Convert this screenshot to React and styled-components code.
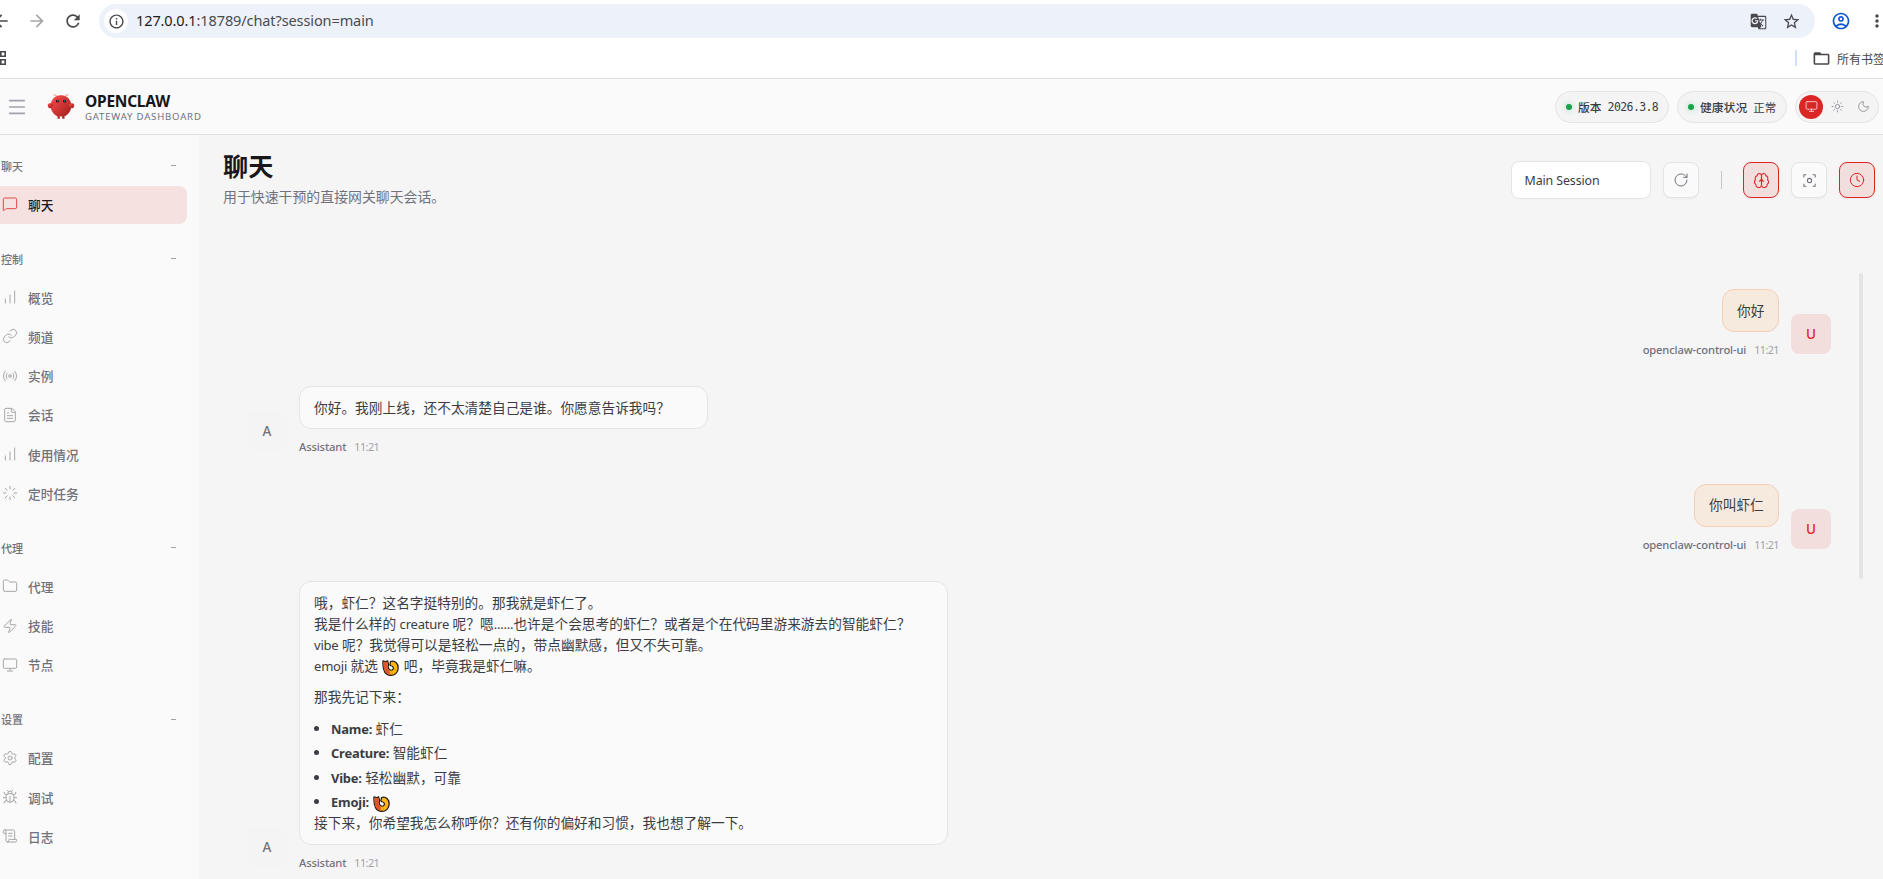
import React from 'react';
import styled, { createGlobalStyle, css } from 'styled-components';
import {
  MessageSquare, ChartNoAxesColumnIncreasing, Link, Radio, FileText, Loader, Folder, Zap,
  Monitor, Settings, Bug, ScrollText, Sun, Moon, RotateCw, Clock, Menu,
} from 'lucide-react';
import {
  MdArrowBack, MdArrowForward, MdRefresh, MdInfoOutline, MdGTranslate, MdStarBorder,
  MdMoreVert, MdFolderOpen, MdOutlineAccountCircle,
} from 'react-icons/md';

const sans = '"Noto Sans", "Noto Sans CJK SC", sans-serif';
const cjk = '"Noto Sans CJK SC", "Noto Sans", sans-serif';

const GlobalStyle = createGlobalStyle`
  * { box-sizing: border-box; }
  html, body { margin: 0; overflow: hidden; }
  body { font-family: ${sans}; color: #3c3c43; background: #fff; }
  button { font: inherit; color: inherit; padding: 0; }
`;

const Page = styled.div`
  display: flex;
  flex-direction: column;
  width: 1883px;
  height: 879px;
  overflow: hidden;
`;

/* browser chrome */

const BrowserBar = styled.div`
  display: flex;
  align-items: center;
  height: 42px;
  color: #47484b;
  svg { flex: none; }
`;

const NavIcons = styled.div`
  display: flex;
  align-items: center;
  gap: 16px;
  width: 108px;
  margin-left: -9px;
  flex: none;
  .dim { color: #a5a6a8; }
`;

const AddressBar = styled.div`
  display: flex;
  align-items: center;
  flex: none;
  width: 1716px;
  height: 34px;
  padding: 0 14px 0 5px;
  border-radius: 17px;
  background: #edf1fa;
`;

const SiteInfo = styled.span`
  display: flex;
  align-items: center;
  justify-content: center;
  width: 24px;
  height: 24px;
  border-radius: 50%;
  background: #fff;
`;

const Url = styled.span`
  flex: 1;
  margin-left: 8px;
  padding-bottom: 2px;
  font-size: 14.5px;
  letter-spacing: -0.1px;
  color: #4a4b4e;
  b { font-weight: 400; color: #1f2023; }
`;

const AddressIcons = styled.span`
  display: flex;
  align-items: center;
  gap: 15px;
`;

const ProfileIcons = styled.div`
  display: flex;
  align-items: center;
  gap: 16px;
  margin-left: 16px;
`;

const BookmarkBar = styled.div`
  display: flex;
  align-items: center;
  justify-content: space-between;
  height: 36px;
  padding-bottom: 4px;
  color: #47484b;
  white-space: nowrap;
`;

const AllBookmarks = styled.div`
  display: flex;
  align-items: center;
  width: 88px;
  font: 12px ${cjk};
  overflow: hidden;
  svg { flex: none; margin: 0 6px 0 15px; }
`;

const BookmarkDivider = styled.i`
  flex: none;
  width: 2px;
  height: 16px;
  background: #cfe0fa;
`;

/* app header */

const Header = styled.header`
  display: flex;
  align-items: center;
  height: 57px;
  padding: 0 4px 0 6px;
  border-top: 1px solid #e0e0e1;
  border-bottom: 1px solid #e0e0e1;
  background: #fafafa;
`;

const Brand = styled.div`
  display: flex;
  align-items: center;
  flex: 1;
  margin-left: 19px;
`;

const BrandText = styled.div`
  display: flex;
  flex-direction: column;
  margin-left: 10px;
  padding-top: 4px;
  strong {
    font-size: 15.5px;
    line-height: 17px;
    letter-spacing: -0.25px;
    color: #17171a;
  }
  span {
    font-size: 9.6px;
    line-height: 14px;
    letter-spacing: 0.8px;
    color: #71717a;
  }
`;

const Pill = styled.div`
  display: flex;
  align-items: center;
  height: 32px;
  width: ${p => p.$width}px;
  margin-right: 8px;
  padding-left: 10px;
  border: 1px solid #e4e4e7;
  border-radius: 16px;
  background: #f4f4f5;
  font: 500 11.8px ${cjk};
  white-space: nowrap;
`;

const StatusDot = styled.i`
  width: 6px;
  height: 6px;
  margin-right: 6px;
  border-radius: 50%;
  background: #16a34a;
  box-shadow: 0 0 6px rgba(22, 163, 74, 0.35);
`;

const PillValue = styled.span`
  margin-left: 6px;
  font: 11.5px ${p => (p.$mono ? '"DejaVu Sans Mono", monospace' : cjk)};
  letter-spacing: ${p => (p.$mono ? '-0.6px' : 0)};
`;

const ThemeToggle = styled.div`
  display: flex;
  align-items: center;
  gap: 2px;
  width: 84px;
  height: 32px;
  padding: 0 3px;
  border: 1px solid #e4e4e7;
  border-radius: 16px;
  background: #f4f4f5;
`;

const ThemeButton = styled.button`
  display: flex;
  align-items: center;
  justify-content: center;
  width: 24px;
  height: 24px;
  border: 0;
  border-radius: 50%;
  background: ${p => (p.$active ? '#dc2626' : 'transparent')};
  color: ${p => (p.$active ? '#f9dcdc' : '#85858c')};
`;

/* sidebar */

const Body = styled.div`
  display: flex;
  flex: 1;
  min-height: 0;
`;

const Sidebar = styled.nav`
  flex: none;
  width: 199px;
  padding-top: 17px;
  background: #fafafa;
`;

const NavGroup = styled.section`
  padding-right: 12px;
  margin-bottom: 21px;
`;

const NavLabel = styled.div`
  display: flex;
  align-items: center;
  justify-content: space-between;
  height: 28px;
  margin-bottom: 6px;
  padding: 0 11px 1px 1px;
  font: 500 11px ${cjk};
  color: #71717a;
  i { width: 5px; height: 1px; background: #a1a1aa; }
`;

const NavItem = styled.a`
  display: flex;
  align-items: center;
  gap: 10px;
  height: 38.2px;
  margin-bottom: 1px;
  padding: 0 0 2px 2px;
  border-radius: 0 8px 8px 0;
  font: 500 12.7px ${cjk};
  color: #71717a;
  svg { color: #a6a6aa; }
  ${p => p.$active && css`
    background: #f6e1e1;
    color: #18181b;
    svg { color: #e04848; }
  `}
`;

/* chat */

const Main = styled.main`
  display: flex;
  flex-direction: column;
  flex: 1;
  min-width: 0;
  background: #f5f5f5;
`;

const ChatHeader = styled.div`
  display: flex;
  justify-content: space-between;
  height: 138px;
  padding: 12px 8px 0 24px;
`;

const Title = styled.h1`
  margin: 0;
  font: 700 25.2px/36px ${cjk};
  color: #18181b;
`;

const Subtitle = styled.p`
  margin: 2px 0 0;
  font: 13.9px/22px ${cjk};
  color: #71717a;
`;

const Controls = styled.div`
  display: flex;
  align-items: center;
  gap: 12px;
  height: 38px;
  margin-top: 14px;
`;

const SessionSelect = styled.div`
  display: flex;
  align-items: center;
  width: 140px;
  height: 38px;
  padding-left: 12.5px;
  border: 1px solid #e4e4e7;
  border-radius: 8px;
  background: #fff;
  font-size: 12.4px;
  letter-spacing: -0.1px;
`;

const ControlDivider = styled.i`
  width: 1px;
  height: 18px;
  margin: 0 9px 0 10px;
  background: #c6c8cc;
`;

const IconButton = styled.button`
  display: flex;
  align-items: center;
  justify-content: center;
  width: 36px;
  height: 36px;
  border: 1px solid ${p => (p.$active ? '#dc2626' : '#e4e4e7')};
  border-radius: 8px;
  background: ${p => (p.$active ? '#f3dede' : '#fafafa')};
  color: ${p => (p.$active ? '#dc2626' : '#71717a')};
  box-shadow: 0 1px 2px rgba(0, 0, 0, 0.04);
`;

const Thread = styled.div`
  display: flex;
  flex: 1;
  min-height: 0;
  padding-right: 20px;
`;

const Messages = styled.div`
  flex: 1;
  padding: 16px 28px 0 48px;
`;

const ScrollThumb = styled.i`
  width: 4px;
  height: 306px;
  border-radius: 2px;
  background: #e4e4e7;
`;

const MessageRow = styled.div`
  display: flex;
  flex-direction: ${p => (p.$user ? 'row-reverse' : 'row')};
  align-items: flex-end;
  gap: 12px;
  margin-bottom: 32.3px;
`;

const Avatar = styled.div`
  display: flex;
  align-items: center;
  justify-content: center;
  flex: none;
  width: 40px;
  height: 40px;
  border-radius: 8px;
  font-size: 13.5px;
  font-weight: 500;
  background: ${p => (p.$user ? '#f3dede' : '#f4f4f5')};
  color: ${p => (p.$user ? '#dc2626' : '#71717a')};
`;

const MessageColumn = styled.div`
  display: flex;
  flex-direction: column;
  align-items: ${p => (p.$user ? 'flex-end' : 'flex-start')};
`;

const Bubble = styled.div`
  width: ${p => p.$width}px;
  padding: 9.6px 14px 10.4px;
  border: 1px solid ${p => (p.$user ? '#f5cfb4' : '#e4e4e7')};
  border-radius: 12px;
  background: ${p => (p.$user ? '#f6eade' : '#fafafa')};
  font: 13.7px/21.1px ${cjk};
  word-spacing: 0.4px;
  white-space: nowrap;
  p { margin: 0 0 10.4px; }
  p:last-child { margin: 0; }
`;

const Latin = styled.span`
  font-family: "Noto Sans", sans-serif;
  font-size: ${p => (p.$bold ? 12.9 : 13)}px;
  line-height: 0;
  letter-spacing: -0.2px;
  font-weight: ${p => (p.$bold ? 700 : 400)};
`;

const FactList = styled.ul`
  margin: 0;
  padding: 0 0 0 17px;
  list-style: none;
  li { position: relative; height: 21.1px; margin-bottom: 3.3px; }
  li:last-child { margin-bottom: 0; }
  li::before {
    content: '';
    position: absolute;
    left: -17px;
    top: 8px;
    width: 5px;
    height: 5px;
    border-radius: 50%;
    background: #3c3c43;
  }
`;

const Meta = styled.div`
  display: flex;
  gap: 8px;
  height: 16px;
  margin-top: 6px;
  font-size: 11.2px;
  line-height: 23px;
  letter-spacing: -0.15px;
  color: #a1a1aa;
  b { font-weight: 500; color: #71717a; }
  span { font-size: 10.8px; letter-spacing: -0.55px; }
`;

const ShrimpSvg = styled.svg`
  vertical-align: -2px;
  margin: -3px 1px;
`;

const Shrimp = () => (
  <ShrimpSvg width="17" height="16" viewBox="0 0 17 16" fill="none">
    <path d="M1 .8L3.500 1.800L5.600 .8L6.600 4.500C5.800 7 6.500 9.500 8.500 10.200C11 10.500 12 8.500 11 7C10 5.500 8.500 6.500 8 5L8.500 1.500C13 0 16.200 3.500 16.200 8C16.200 12.500 12.800 15.400 8.800 15.400C3.500 15.400 .3 11 1 .8Z" fill="#fdb813" stroke="#1d1410" strokeWidth="1.200" strokeLinejoin="round" />
    <path d="M1.600 1.700L3.500 2.500L5.200 1.800L5.900 4.500C5.200 7.500 6 9.500 7.500 10.500L8 14.700C3.800 14.500 1 10.500 1.600 1.700Z" fill="#e4512f" />
    <path d="M9.500 10.500L10.500 14.500M11.700 9L15 10.500" stroke="#e88a12" strokeWidth=".8" />
    <circle cx="9" cy="7.500" r="1.100" fill="#fff" />
  </ShrimpSvg>
);

const Logo = () => (
  <svg width="28" height="28" viewBox="0 0 120 120">
    <defs>
      <linearGradient id="lobster" x1="0%" y1="0%" x2="100%" y2="100%">
        <stop offset="0%" stopColor="#ff4d4d" />
        <stop offset="100%" stopColor="#991b1b" />
      </linearGradient>
    </defs>
    <path fill="url(#lobster)" d="M60 10C30 10 15 35 15 55C15 75 30 95 45 100L45 110L55 110L55 100C55 100 60 102 65 100L65 110L75 110L75 100C90 95 105 75 105 55C105 35 90 10 60 10Z" />
    <path fill="url(#lobster)" d="M20 45C5 40 0 50 5 60C10 70 20 65 25 55C28 48 25 45 20 45Z" />
    <path fill="url(#lobster)" d="M100 45C115 40 120 50 115 60C110 70 100 65 95 55C92 48 95 45 100 45Z" />
    <path d="M45 15Q35 5 30 8M75 15Q85 5 90 8" stroke="#ff4d4d" strokeWidth="3" strokeLinecap="round" fill="none" />
    <circle cx="45" cy="35" r="6" fill="#050810" />
    <circle cx="75" cy="35" r="6" fill="#050810" />
    <circle cx="46" cy="34" r="2.500" fill="#00e5cc" />
    <circle cx="76" cy="34" r="2.500" fill="#00e5cc" />
  </svg>
);

const BrainIcon = () => (
  <svg width="17" height="17" viewBox="0 0 24 24" fill="none" stroke="currentColor" strokeWidth="1.500" strokeLinecap="round" strokeLinejoin="round">
    <path d="M12 5a3 3 0 1 0-5.997.125 4 4 0 0 0-2.526 5.770 4 4 0 0 0 .556 6.588A4 4 0 1 0 12 18Z" />
    <path d="M12 5a3 3 0 1 1 5.997.125 4 4 0 0 1 2.526 5.770 4 4 0 0 1-.556 6.588A4 4 0 1 1 12 18Z" />
    <path d="M15 13a4.500 4.500 0 0 1-3-4 4.500 4.500 0 0 1-3 4" />
  </svg>
);

const FocusIcon = () => (
  <svg width="17" height="17" viewBox="0 0 24 24" fill="none" stroke="currentColor" strokeWidth="1.500" strokeLinecap="round" strokeLinejoin="round">
    <path d="M4 7V4h3M20 7V4h-3M4 17v3h3M20 17v3h-3" />
    <circle cx="12" cy="12" r="3" />
  </svg>
);

const AppsIcon = () => (
  <svg width="6" height="14" viewBox="0 0 6 14" fill="none" stroke="currentColor" strokeWidth="1.600">
    <path d="M.8 .8h4.400v4.400h-4.400zM.8 8.800h4.400v4.400h-4.400z" />
  </svg>
);

const navGroups = [
  { label: '聊天', items: [['聊天', MessageSquare, true]] },
  {
    label: '控制',
    items: [
      ['概览', ChartNoAxesColumnIncreasing],
      ['频道', Link],
      ['实例', Radio],
      ['会话', FileText],
      ['使用情况', ChartNoAxesColumnIncreasing],
      ['定时任务', Loader],
    ],
  },
  { label: '代理', items: [['代理', Folder], ['技能', Zap], ['节点', Monitor]] },
  { label: '设置', items: [['配置', Settings], ['调试', Bug], ['日志', ScrollText]] },
];

const Message = ({ user, width, children }) => (
  <MessageRow $user={user}>
    <Avatar $user={user}>{user ? 'U' : 'A'}</Avatar>
    <MessageColumn $user={user}>
      <Bubble $user={user} $width={width}>{children}</Bubble>
      <Meta>
        <b>{user ? 'openclaw-control-ui' : 'Assistant'}</b>
        <span>11:21</span>
      </Meta>
    </MessageColumn>
  </MessageRow>
);

const App = () => (
  <Page>
    <GlobalStyle />
    <BrowserBar>
      <NavIcons>
        <MdArrowBack size={20} />
        <MdArrowForward size={20} className="dim" />
        <MdRefresh size={20} />
      </NavIcons>
      <AddressBar>
        <SiteInfo><MdInfoOutline size={17} /></SiteInfo>
        <Url><b>127.0.0.1</b>:18789/chat?session=main</Url>
        <AddressIcons>
          <MdGTranslate size={17} />
          <MdStarBorder size={19} />
        </AddressIcons>
      </AddressBar>
      <ProfileIcons>
        <MdOutlineAccountCircle size={20} color="#0b57d0" />
        <MdMoreVert size={20} />
      </ProfileIcons>
    </BrowserBar>
    <BookmarkBar>
      <AppsIcon />
      <AllBookmarks>
        <BookmarkDivider />
        <MdFolderOpen size={19} />
        所有书签
      </AllBookmarks>
    </BookmarkBar>
    <Header>
      <Menu size={22} strokeWidth={1.8} color="#a1a1aa" />
      <Brand>
        <Logo />
        <BrandText>
          <strong>OPENCLAW</strong>
          <span>GATEWAY DASHBOARD</span>
        </BrandText>
      </Brand>
      <Pill $width={114}><StatusDot />版本<PillValue $mono>2026.3.8</PillValue></Pill>
      <Pill $width={110}><StatusDot />健康状况<PillValue>正常</PillValue></Pill>
      <ThemeToggle>
        <ThemeButton $active><Monitor size={13} strokeWidth={1.5} /></ThemeButton>
        <ThemeButton><Sun size={13} strokeWidth={1.5} /></ThemeButton>
        <ThemeButton><Moon size={13} strokeWidth={1.5} /></ThemeButton>
      </ThemeToggle>
    </Header>
    <Body>
      <Sidebar>
        {navGroups.map(group => (
          <NavGroup key={group.label}>
            <NavLabel>{group.label}<i /></NavLabel>
            {group.items.map(([name, Icon, active]) => (
              <NavItem key={name} $active={active}>
                <Icon size={16} strokeWidth={1.5} />
                {name}
              </NavItem>
            ))}
          </NavGroup>
        ))}
      </Sidebar>
      <Main>
        <ChatHeader>
          <div>
            <Title>聊天</Title>
            <Subtitle>用于快速干预的直接网关聊天会话。</Subtitle>
          </div>
          <Controls>
            <SessionSelect>Main Session</SessionSelect>
            <IconButton><RotateCw size={16} strokeWidth={1.5} /></IconButton>
            <ControlDivider />
            <IconButton $active><BrainIcon /></IconButton>
            <IconButton><FocusIcon /></IconButton>
            <IconButton $active><Clock size={16} strokeWidth={1.5} /></IconButton>
          </Controls>
        </ChatHeader>
        <Thread>
          <Messages>
            <Message user width={57}>你好</Message>
            <Message width={409}>你好。我刚上线，还不太清楚自己是谁。你愿意告诉我吗？</Message>
            <Message user width={85}>你叫虾仁</Message>
            <Message width={649}>
              <p>
                哦，虾仁？这名字挺特别的。那我就是虾仁了。<br />
                我是什么样的 <Latin>creature</Latin> 呢？嗯<Latin>......</Latin>也许是个会思考的虾仁？或者是个在代码里游来游去的智能虾仁？<br />
                <Latin>vibe</Latin> 呢？我觉得可以是轻松一点的，带点幽默感，但又不失可靠。<br />
                <Latin>emoji</Latin> 就选 <Shrimp /> 吧，毕竟我是虾仁嘛。
              </p>
              <p>那我先记下来：</p>
              <FactList>
                <li><Latin $bold>Name:</Latin> 虾仁</li>
                <li><Latin $bold>Creature:</Latin> 智能虾仁</li>
                <li><Latin $bold>Vibe:</Latin> 轻松幽默，可靠</li>
                <li><Latin $bold>Emoji:</Latin> <Shrimp /></li>
              </FactList>
              <p>接下来，你希望我怎么称呼你？还有你的偏好和习惯，我也想了解一下。</p>
            </Message>
          </Messages>
          <ScrollThumb />
        </Thread>
      </Main>
    </Body>
  </Page>
);

export default App;
